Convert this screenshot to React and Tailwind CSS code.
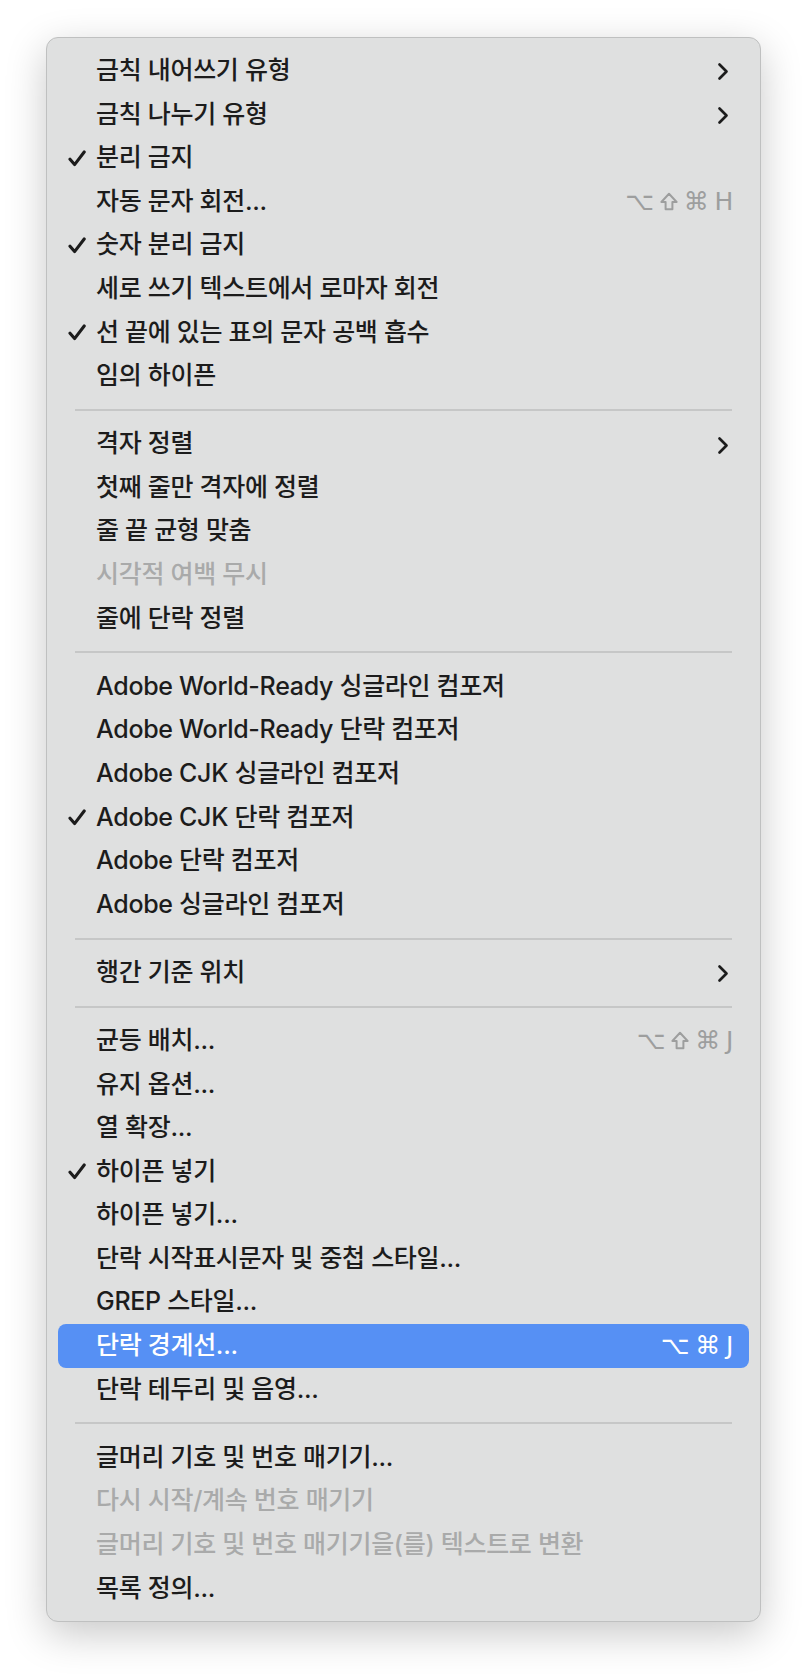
import React from 'react'

// menu model: 'sep' draws a divider, otherwise a row
const items = [
  { label: '금칙 내어쓰기 유형', sub: true },
  { label: '금칙 나누기 유형', sub: true },
  { label: '분리 금지', checked: true },
  { label: '자동 문자 회전...', keys: ['⌥', 'shift', '⌘', 'H'] },
  { label: '숫자 분리 금지', checked: true },
  { label: '세로 쓰기 텍스트에서 로마자 회전' },
  { label: '선 끝에 있는 표의 문자 공백 흡수', checked: true },
  { label: '임의 하이픈' },
  'sep',
  { label: '격자 정렬', sub: true },
  { label: '첫째 줄만 격자에 정렬' },
  { label: '줄 끝 균형 맞춤' },
  { label: '시각적 여백 무시', disabled: true },
  { label: '줄에 단락 정렬' },
  'sep',
  { label: 'Adobe World-Ready 싱글라인 컴포저' },
  { label: 'Adobe World-Ready 단락 컴포저' },
  { label: 'Adobe CJK 싱글라인 컴포저' },
  { label: 'Adobe CJK 단락 컴포저', checked: true },
  { label: 'Adobe 단락 컴포저' },
  { label: 'Adobe 싱글라인 컴포저' },
  'sep',
  { label: '행간 기준 위치', sub: true },
  'sep',
  { label: '균등 배치...', keys: ['⌥', 'shift', '⌘', 'J'] },
  { label: '유지 옵션...' },
  { label: '열 확장...' },
  { label: '하이픈 넣기', checked: true },
  { label: '하이픈 넣기...' },
  { label: '단락 시작표시문자 및 중첩 스타일...' },
  { label: 'GREP 스타일...' },
  { label: '단락 경계선...', keys: ['⌥', '⌘', 'J'], active: true },
  { label: '단락 테두리 및 음영...' },
  'sep',
  { label: '글머리 기호 및 번호 매기기...' },
  { label: '다시 시작/계속 번호 매기기', disabled: true },
  { label: '글머리 기호 및 번호 매기기을(를) 텍스트로 변환', disabled: true },
  { label: '목록 정의...' },
]

function Check() {
  return (
    <svg width="18" height="17" viewBox="0 0 18 17" fill="none">
      <path d="M2 9.2 L6.6 14.6 L16.2 2" stroke="currentColor" strokeWidth="3.1" strokeLinecap="round" strokeLinejoin="round" />
    </svg>
  )
}

function Chevron() {
  return (
    <svg width="12" height="19" viewBox="0 0 12 19" fill="none">
      <path d="M2.5 2.5 L9.5 9.5 L2.5 16.5" stroke="currentColor" strokeWidth="2.7" strokeLinecap="round" strokeLinejoin="round" />
    </svg>
  )
}

function Shift() {
  return (
    <svg width="18" height="19" viewBox="0 0 18 19" fill="none">
      <path d="M9 1.8 L16.6 10 H12.4 V17.2 H5.6 V10 H1.4 Z" stroke="currentColor" strokeWidth="2" strokeLinejoin="round" />
    </svg>
  )
}

function Row({ item }) {
  const { label, sub, checked, keys, disabled, active } = item
  const text = active ? 'text-white' : disabled ? 'text-[#a9aaaa]' : 'text-[#1c1c1c]'
  return (
    <div className={`mx-[11px] h-[43.6px] flex items-center rounded-[8px] ${active ? 'bg-[#5690f4]' : ''} ${text}`}>
      <div className="w-[38px] flex justify-end pr-[10px] pt-[1px]">{checked && <Check />}</div>
      <span className="flex-1 whitespace-nowrap">{label}</span>
      {sub && (
        <span className="pr-[20px] pt-[2px]">
          <Chevron />
        </span>
      )}
      {keys && (
        <span className={`pr-[16px] flex items-center gap-[6px] ${active ? 'text-white' : 'text-[#9d9e9e]'}`}>
          {keys.map((k, i) =>
            k === 'shift' ? (
              <Shift key={i} />
            ) : (
              <span key={i} className="font-['DejaVu_Sans',sans-serif]">{k}</span>
            )
          )}
        </span>
      )}
    </div>
  )
}

export default function App() {
  return (
    <div className="w-[806px] h-[1674px] bg-white pt-[37px] pl-[46px] font-['Inter','Noto_Sans_CJK_KR',sans-serif] text-[25px] font-medium tracking-[-0.3px]">
      <div className="w-[715px] rounded-[12px] border border-[#bfc0c0] bg-[#dfe0e0] pt-[11px] pb-[11px] shadow-[0_12px_40px_rgba(0,0,0,0.22)]">
        {items.map((it, i) =>
          it === 'sep' ? (
            <div key={i} className="h-[24.5px] flex items-center px-[28px]">
              <div className="h-[2px] w-full bg-[#c6c7c7]" />
            </div>
          ) : (
            <Row key={i} item={it} />
          )
        )}
      </div>
    </div>
  )
}
